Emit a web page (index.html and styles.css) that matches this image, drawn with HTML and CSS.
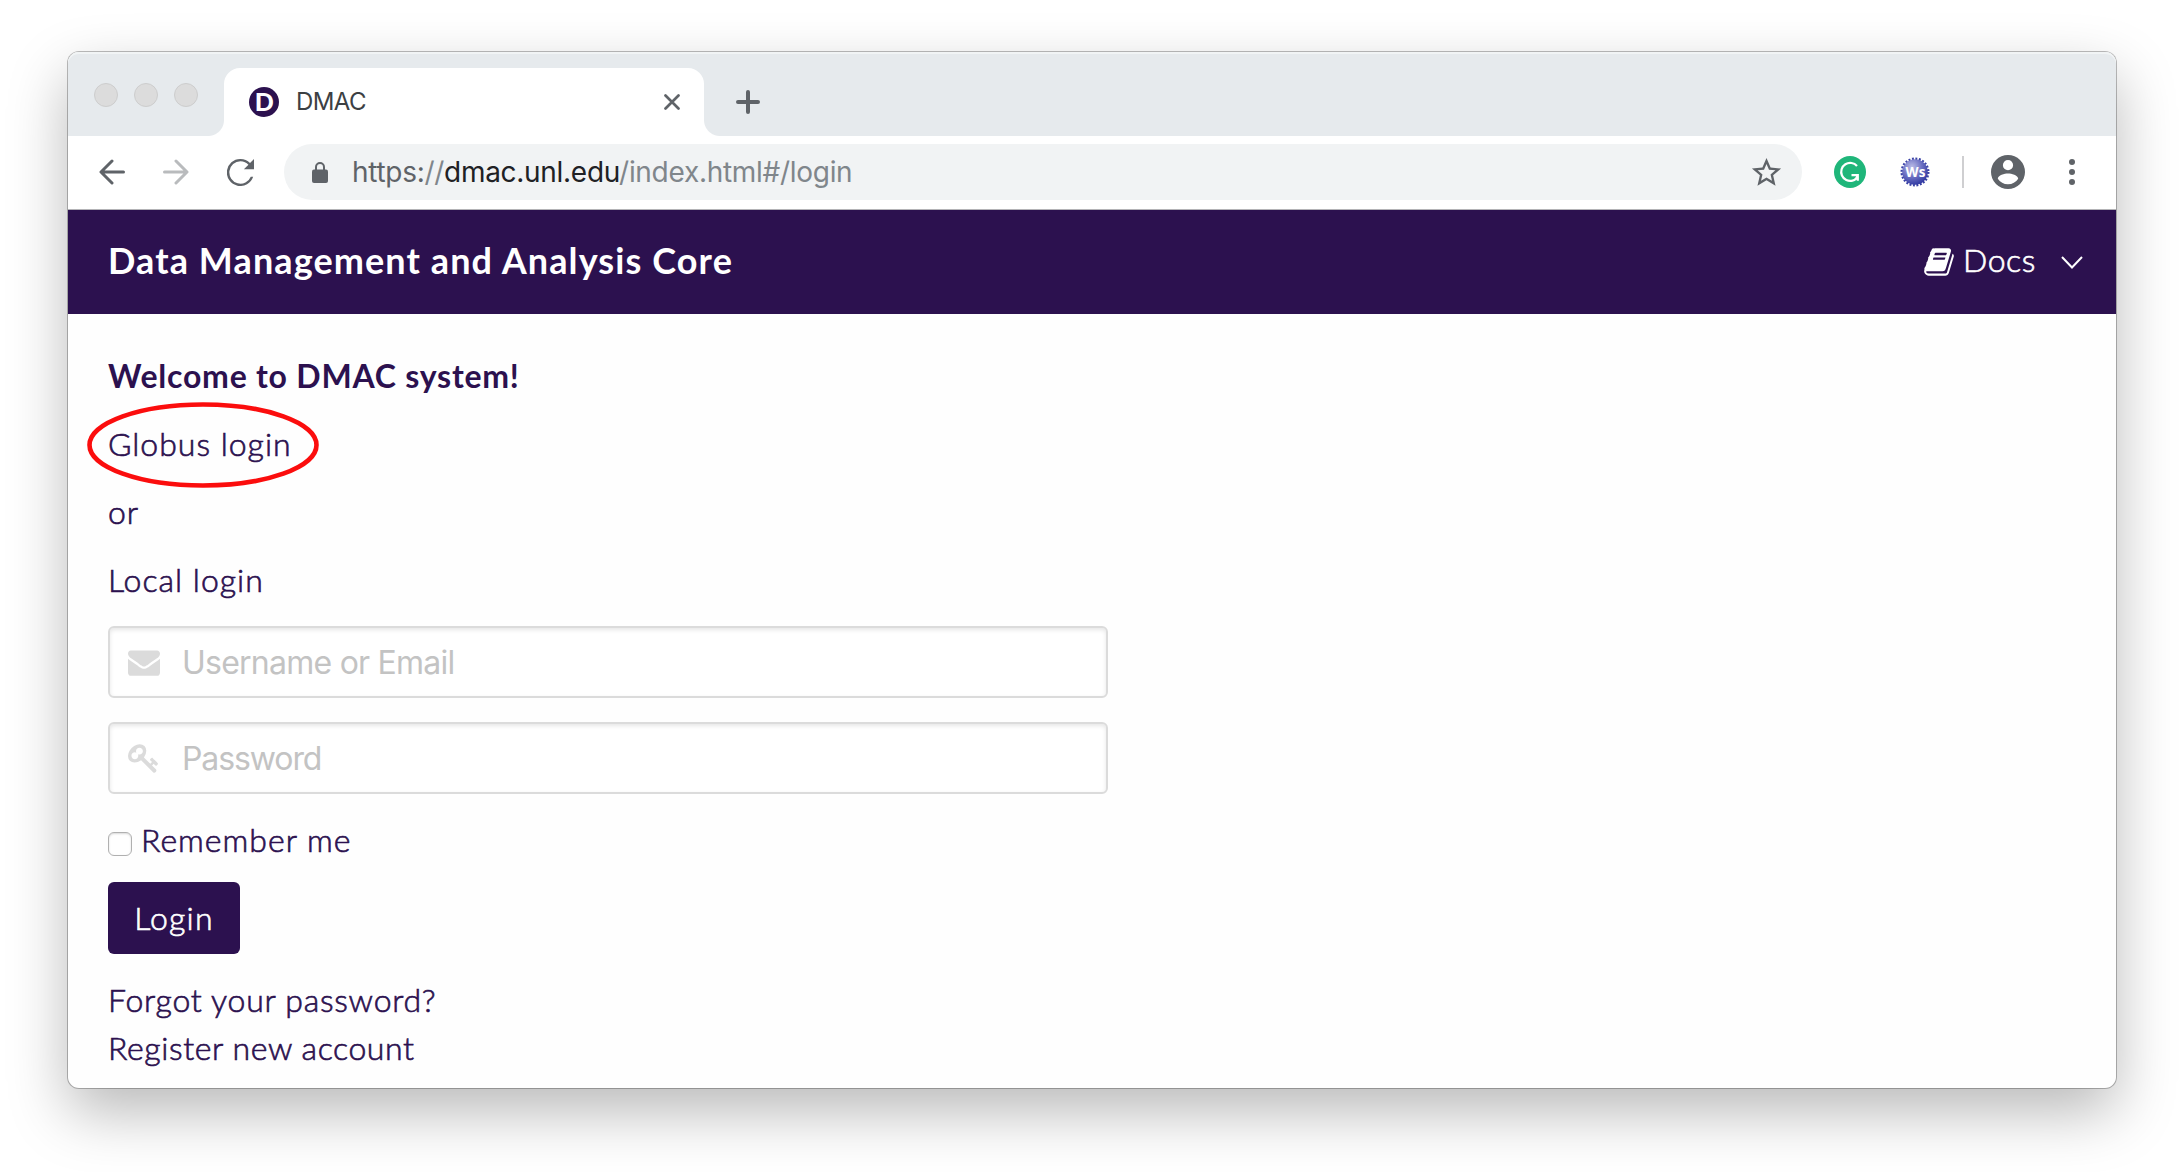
FILE: index.html
```html
<!DOCTYPE html>
<html lang="en">
<head>
<meta charset="utf-8">
<title>DMAC</title>
<link rel="stylesheet" href="styles.css">
</head>
<body>
<div class="window">
  <div class="tabstrip">
    <div class="lights"><i></i><i></i><i></i></div>
    <div class="tab">
      <svg class="favicon" viewBox="0 0 30 30"><circle cx="15" cy="15" r="15" fill="#2c114f"/><text x="15.3" y="24" text-anchor="middle" class="favicon-letter">D</text></svg>
      <span class="tab-title">DMAC</span>
      <svg class="close" viewBox="0 0 16 16"><path d="M1.500 1.500l13 13M14.500 1.500l-13 13" stroke="#5f6368" stroke-width="2.700" stroke-linecap="round"/></svg>
    </div>
    <svg class="plus" viewBox="0 0 24 24"><path d="M12 2v20M2 12h20" stroke="#5f6368" stroke-width="4" stroke-linecap="round"/></svg>
  </div>
  <div class="toolbar">
    <svg class="arrow" viewBox="0 0 26 26"><path d="M24.500 13H2.500M13 2L2 13l11 11" fill="none" stroke="#5f6368" stroke-width="3" stroke-linecap="round" stroke-linejoin="round"/></svg>
    <svg class="arrow forward" viewBox="0 0 26 26"><path d="M1.500 13h22M13 2l11 11-11 11" fill="none" stroke="#b9bbbd" stroke-width="3" stroke-linecap="round" stroke-linejoin="round"/></svg>
    <svg class="reload" viewBox="4 4 16 16"><path fill="#5f6368" d="M17.650 6.350A7.958 7.958 0 0012 4a8 8 0 107.500 10.500h-1.400A6.600 6.600 0 1112 5.400c1.900 0 3.500.800 4.700 2L14 10.100h6V4z"/></svg>
    <div class="omnibox">
      <svg class="lock" viewBox="0 0 16 21"><path d="M4 8V5a4 4 0 018 0v3" fill="none" stroke="#5f6368" stroke-width="2"/><rect y="7.500" width="16" height="13.500" rx="2" fill="#5f6368"/></svg>
      <div class="url"><span class="scheme">https:<span class="path">//</span></span><span class="host">dmac.unl.edu</span><span class="path">/index.html#/login</span></div>
      <svg class="star" viewBox="0 0 24 24"><path fill="#5f6368" d="M22 9.240l-7.190-.620L12 2 9.190 8.630 2 9.240l5.460 4.730L5.820 21 12 17.270 18.180 21l-1.630-7.030zM12 15.400l-3.760 2.270 1-4.280-3.320-2.880 4.380-.380L12 6.100l1.710 4.040 4.380.380-3.320 2.880 1 4.280z"/></svg>
    </div>
    <svg class="grammar" viewBox="0 0 32 32"><circle cx="16" cy="16" r="16" fill="#1fb67a"/><path d="M23 10A9 9 0 1018.500 24.600c2.700-.500 4.300-2 5.100-5.300M17.500 19.200h6.300v5.600" fill="none" stroke="#fff" stroke-width="2.200"/></svg>
    <svg class="badge" viewBox="0 0 32 32">
      <defs><radialGradient id="seal" cx=".38" cy=".3" r=".75"><stop offset="0" stop-color="#b9bbe6"/><stop offset=".5" stop-color="#7074c4"/><stop offset="1" stop-color="#2c35a0"/></radialGradient></defs>
      <circle cx="16" cy="16" r="13.200" fill="none" stroke="#3941a5" stroke-width="2.600" stroke-dasharray="1.900 1.556"/>
      <circle cx="16" cy="16" r="12.800" fill="url(#seal)"/>
      <text x="16.500" y="21" text-anchor="middle" class="badge-text">Ws</text>
    </svg>
    <div class="divider"></div>
    <svg class="account" viewBox="2 2 20 20"><path fill="#5f6368" d="M12 2a10 10 0 100 20 10 10 0 000-20zm0 3a3 3 0 110 6 3 3 0 010-6zm0 14.200a7.200 7.200 0 01-6-3.220c.030-1.990 4-3.080 6-3.080s5.970 1.090 6 3.080a7.200 7.200 0 01-6 3.220z"/></svg>
    <svg class="menu" viewBox="0 0 6 26"><g fill="#5f6368"><circle cx="3" cy="3" r="3"/><circle cx="3" cy="13" r="3"/><circle cx="3" cy="23" r="3"/></g></svg>
  </div>
  <header class="navbar">
    <div class="brand">Data Management and Analysis Core</div>
    <div class="docs">
      <svg class="book" viewBox="0 0 1792 1792"><path fill="#fff" d="M1703 478q40 57 18 129l-275 906q-19 64-76.500 107.500t-122.500 43.500h-923q-77 0-148.500-53.500t-99.500-131.500q-24-67-2-127 0-4 3-27t4-37q1-8-3-21.500t-3-19.500q2-11 8-21t16.500-23.500 16.500-23.500q23-38 45-91.500t30-91.500q3-10 .5-30t-.5-28q3-11 17-28t17-23q21-36 42-92t25-90q1-9-2.500-32t.5-28q4-13 22-30.500t22-22.500q19-26 42.500-84.500t27.500-96.500q1-8-3-25.500t-2-26.500q2-8 9-18t18-23 17-21q8-12 16.500-30.500t15-35 16-36 19.500-32 26.500-23.500 36-11.500 47.500 5.500l-1 3q38-9 51-9h761q74 0 114 56t18 130l-274 906q-36 119-71.500 153.500t-128.500 34.500h-869q-27 0-38 15-11 16-1 43 24 70 144 70h923q29 0 56-15.500t35-41.500l300-987q7-22 5-57 38 15 59 43zm-1064 2q-4 13 2 22.500t20 9.500h608q13 0 25.500-9.500t16.500-22.500l21-64q4-13-2-22.500t-20-9.500h-608q-13 0-25.500 9.500t-16.500 22.500zm-83 256q-4 13 2 22.500t20 9.500h608q13 0 25.500-9.500t16.500-22.500l21-64q4-13-2-22.500t-20-9.500h-608q-13 0-25.500 9.500t-16.500 22.500z"/></svg>
      <span class="docs-label">Docs</span>
      <svg class="chevron" viewBox="0 0 22 13"><path d="M1 1l10 10.500L21 1" fill="none" stroke="#fff" stroke-width="2"/></svg>
    </div>
  </header>
  <main class="page">
    <p class="line welcome">Welcome to DMAC system!</p>
    <p class="line globus">Globus login<svg class="ring" viewBox="0 0 232 86"><ellipse cx="116" cy="43" rx="113.500" ry="40.500" fill="none" stroke="#fb0d0d" stroke-width="4.600"/></svg></p>
    <p class="line">or</p>
    <p class="line local">Local login</p>
    <div class="field">
      <svg class="field-icon" viewBox="0 0 1792 1792"><path d="M1792 710v794q0 66-47 113t-113 47h-1472q-66 0-113-47t-47-113v-794q44 49 101 87 362 246 497 345 57 42 92.500 65.500t94.500 48 110 24.500h2q51 0 110-24.500t94.500-48 92.500-65.500q170-123 498-345 57-39 100-87zm0-294q0 79-49 151t-122 123q-376 261-468 325-10 7-42.500 31t-54 38.500-52 32.500-57.500 27-50 9h-2q-23 0-50-9t-57.500-27-52-32.500-54-38.500-42.500-31q-91-64-262-182.500t-205-142.500q-62-42-117-115.500t-55-136.500q0-78 41.500-130t118.500-52h1472q65 0 112.500 47t47.500 113z"/></svg>
      <span class="hint user">Username or Email</span>
    </div>
    <div class="field">
      <svg class="field-icon" viewBox="0 0 1792 1792"><path d="M832 512q0-80-56-136t-136-56-136 56-56 136q0 42 19 83-41-19-83-19-80 0-136 56t-56 136 56 136 136 56 136-56 56-136q0-42-19-83 41 19 83 19 80 0 136-56t56-136zm851 704q0 17-49 66t-66 49q-9 0-28.500-16t-36.500-33-38.500-40-24.500-26l-96 96 220 220q28 28 28 68 0 42-39 81t-81 39q-40 0-68-28l-671-671q-176 131-365 131-163 0-265.500-102.500t-102.500-265.500q0-160 95-313t248-248 313-95q163 0 265.500 102.500t102.500 265.500q0 189-131 365l355 355 96-96q-3-3-26-24.500t-40-38.500-33-36.500-16-28.500q0-17 49-66t66-49q13 0 23 10 6 6 46 44.500t82 79.500 86.500 86 73 78 28.500 41z"/></svg>
      <span class="hint pass">Password</span>
    </div>
    <div class="line remember"><span class="checkbox"></span>Remember me</div>
    <div class="button">Login</div>
    <p class="line forgot">Forgot your password?</p>
    <p class="line register">Register new account</p>
  </main>
</div>
</body>
</html>
```
FILE: styles.css
```css
* { box-sizing: border-box; }
body {
  margin: 0;
  width: 2184px;
  height: 1172px;
  overflow: hidden;
  background: #fff;
  padding: 52px 68px 84px;
  font-family: Lato, sans-serif;
  font-size: 32px;
  font-weight: 300;
  -webkit-text-stroke: .65px currentColor;
  color: #2c114f;
}
svg { display: block; flex: none; -webkit-text-stroke: 0; }
p { margin: 0; }
.window {
  height: 1036px;
  border-radius: 11px;
  background: #fefefe;
  box-shadow: 0 0 0 1px rgba(0, 0, 0, .26), 0 24px 60px rgba(0, 0, 0, .28);
  display: flex;
  flex-direction: column;
}
.tabstrip {
  height: 84px;
  flex: none;
  display: flex;
  align-items: flex-end;
  background: #e6eaed;
  border-radius: 11px 11px 0 0;
  box-shadow: inset 0 2px 0 #f1f4f5;
}
.lights { display: flex; gap: 16px; padding: 0 26px 29px; width: 156px; }
.lights i { width: 24px; height: 24px; border-radius: 50%; background: #dcdcdc; border: 1px solid #cdcdcd; }
.tab {
  position: relative;
  width: 480px;
  height: 68px;
  background: #fff;
  border-radius: 16px 16px 0 0;
  display: flex;
  align-items: center;
  padding: 0 24px 0 25px;
}
.tab::before, .tab::after { content: ""; position: absolute; bottom: 0; width: 16px; height: 16px; }
.tab::before { left: -16px; background: radial-gradient(circle at 0 0, transparent 15.500px, #fff 16.500px); }
.tab::after { right: -16px; background: radial-gradient(circle at 100% 0, transparent 15.500px, #fff 16.500px); }
.favicon { width: 30px; height: 30px; }
.favicon-letter { font: 900 25px Lato, sans-serif; fill: #fff; }
.tab-title { font: 24px Inter, sans-serif; -webkit-text-stroke: 0; letter-spacing: -.6px; color: #3c4043; margin-left: 17px; flex: 1; padding-bottom: 1px; }
.close { width: 16px; height: 16px; }
.plus { width: 24px; height: 24px; margin: 0 0 22px 32px; }
.toolbar {
  height: 74px;
  flex: none;
  display: flex;
  align-items: center;
  background: #fff;
  border-bottom: 1px solid #b3b3b6;
  padding: 0 41px 1px 31px;
}
.arrow { width: 26px; height: 26px; }
.forward { margin-left: 38px; }
.reload { width: 27px; height: 27px; margin-left: 38px; }
.omnibox {
  width: 1518px;
  height: 56px;
  margin-left: 30px;
  border-radius: 28px;
  background: #f1f3f4;
  display: flex;
  align-items: center;
  padding: 0 18px 0 28px;
}
.lock { width: 16px; height: 21px; }
.url { font: 28px Inter, sans-serif; -webkit-text-stroke: 0; letter-spacing: -.29px; margin-left: 24px; flex: 1; white-space: nowrap; }
.scheme { color: #5f6368; }
.host { color: #202124; }
.path { color: #80868b; }
.star { width: 35px; height: 35px; }
.grammar { width: 32px; height: 32px; margin-left: 32px; }
.badge { width: 32px; height: 32px; margin-left: 33px; }
.badge-text { font: 700 13.500px "Open Sans", sans-serif; fill: #fff; }
.divider { width: 2px; height: 32px; background: #cfcfd1; margin-left: 31px; }
.account { width: 34px; height: 34px; margin-left: 27px; }
.menu { width: 6px; height: 26px; margin-left: 44px; }
.navbar {
  height: 104px;
  flex: none;
  background: #2c114f;
  color: #fff;
  display: flex;
  align-items: center;
  justify-content: space-between;
  padding: 0 33px 0 40px;
}
.brand { font-size: 36px; font-weight: 700; -webkit-text-stroke: 0; letter-spacing: 1.100px; line-height: 54px; white-space: nowrap; padding-bottom: 4px; }
.docs { display: flex; align-items: center; }
.book { width: 32px; height: 32px; }
.docs-label { margin: 0 25px 0 8px; line-height: 48px; padding-bottom: 4px; letter-spacing: .6px; }
.chevron { width: 22px; height: 13px; }
.page { padding: 38px 40px 0; display: flex; flex-direction: column; }
.line { height: 48px; line-height: 48px; margin-bottom: 20px; white-space: nowrap; align-self: flex-start; letter-spacing: 1px; }
.welcome { font-weight: 700; -webkit-text-stroke: 0; letter-spacing: .770px; }
.globus { position: relative; }
.ring { position: absolute; left: -21px; top: -18px; width: 232px; height: 86px; }
.local { margin-bottom: 22px; }
.field {
  width: 1000px;
  height: 72px;
  margin-bottom: 24px;
  border: 2px solid #dbdbdb;
  border-radius: 6px;
  background: #fff;
  box-shadow: inset 0 2px 4px rgba(10, 10, 10, .1);
  display: flex;
  align-items: center;
  padding: 0 18px;
}
.field-icon { width: 32px; height: 32px; fill: #dbdbdb; }
.hint { font-family: Inter, sans-serif; font-weight: 400; -webkit-text-stroke: 0; color: #c3c3c3; margin-left: 22px; }
.user { letter-spacing: -.760px; }
.pass { letter-spacing: -1.100px; }
.remember { display: flex; align-items: center; margin: -2px 0 18px; }
.checkbox { width: 24px; height: 24px; margin: 8px 9px 0 0; border: 1px solid #b0b0b0; border-radius: 6px; background: #fff; box-shadow: inset 0 1px 2px rgba(0, 0, 0, .15); }
.button {
  width: 132px;
  height: 72px;
  margin-bottom: 22px;
  border-radius: 6px;
  background: #2c114f;
  color: #fff;
  display: flex;
  align-items: center;
  justify-content: center;
  padding-bottom: 2px;
  letter-spacing: 1.200px;
}
.forgot { margin-bottom: 0; letter-spacing: .750px; }
.register { letter-spacing: .600px; }
```
